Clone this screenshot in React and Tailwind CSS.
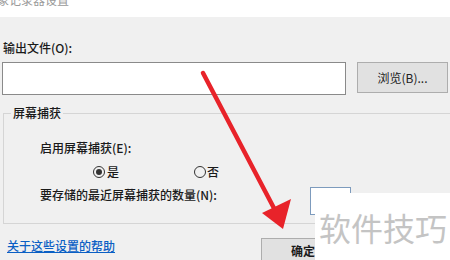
const font = { fontFamily: '"Noto Sans CJK SC", "Liberation Sans", sans-serif' };

export default function App() {
  return (
    <div
      className="relative w-[450px] h-[260px] overflow-hidden bg-[#f0f0f0] text-[12px] text-[#1a1a1a]"
      style={font}
    >
      {/* title strip, cut off at the top */}
      <div className="h-[17px] bg-white overflow-hidden">
        <div className="mt-[-6px] leading-[12px] text-[12px] text-[#9a9a9a] whitespace-nowrap -ml-[3px]">
          象记录器设置
        </div>
      </div>

      <div className="pl-[3px] pt-[23px] leading-[16px] font-medium">输出文件(O):</div>

      <div className="flex items-start pl-[2px] mt-[6px]">
        <div className="w-[344px] h-[33px] bg-white border border-[#8a8a8a]" />
        <button className="ml-[11px] w-[91px] h-[31px] bg-[#e1e1e1] border border-[#adadad] text-[12px] text-[#222]">
          浏览(B)...
        </button>
      </div>

      {/* group box */}
      <div className="relative ml-[3px] mt-[18px] w-[470px] h-[111px] border border-[#d5d5d5]">
        <span className="absolute left-[7px] -top-[9px] px-[2px] bg-[#f0f0f0] leading-[16px] font-medium">
          屏幕捕获
        </span>
        <div className="pl-[36px] pt-[26px] leading-[16px] font-medium">启用屏幕捕获(E):</div>
        <div className="flex items-center mt-[8px] h-[16px] font-medium">
          <div className="flex items-center ml-[89px]">
            <span className="w-[12px] h-[12px] rounded-full border border-[#333] flex items-center justify-center">
              <span className="w-[6px] h-[6px] rounded-full bg-[#333]" />
            </span>
            <span className="ml-[2px]">是</span>
          </div>
          <div className="flex items-center ml-[75px]">
            <span className="w-[12px] h-[12px] rounded-full border border-[#333]" />
            <span className="ml-[1px]">否</span>
          </div>
        </div>
        <div className="flex items-start mt-[7px]">
          <span className="pl-[36px] leading-[16px] font-medium">要存储的最近屏幕捕获的数量(N):</span>
          <div className="ml-[93px] w-[41px] h-[28px] bg-white border border-[#7d9bbd]" />
        </div>
      </div>

      <div className="flex items-start mt-[14px]">
        <a className="ml-[7px] leading-[16px] text-[#0a5fc4] underline font-medium">关于这些设置的帮助</a>
        <button className="ml-[146px] w-[90px] h-[26px] bg-[#e1e1e1] border border-[#adadad] text-left pl-[29px] font-bold">
          确定
        </button>
      </div>

      {/* watermark */}
      <div className="absolute left-[315px] top-[193px] w-[140px] h-[70px] bg-white">
        <div className="mt-[14px] ml-[4px] text-[32px] leading-[40px] text-[#c4c4c4] whitespace-nowrap">
          软件技巧
        </div>
      </div>

      {/* red arrow */}
      <svg className="absolute left-0 top-0 pointer-events-none" width="450" height="260">
        <line x1="203" y1="73" x2="276" y2="212" stroke="#e8232a" strokeWidth="4.5" strokeLinecap="round" />
        <polygon points="262,213 291,199 283,229" fill="#e8232a" />
      </svg>
    </div>
  );
}
